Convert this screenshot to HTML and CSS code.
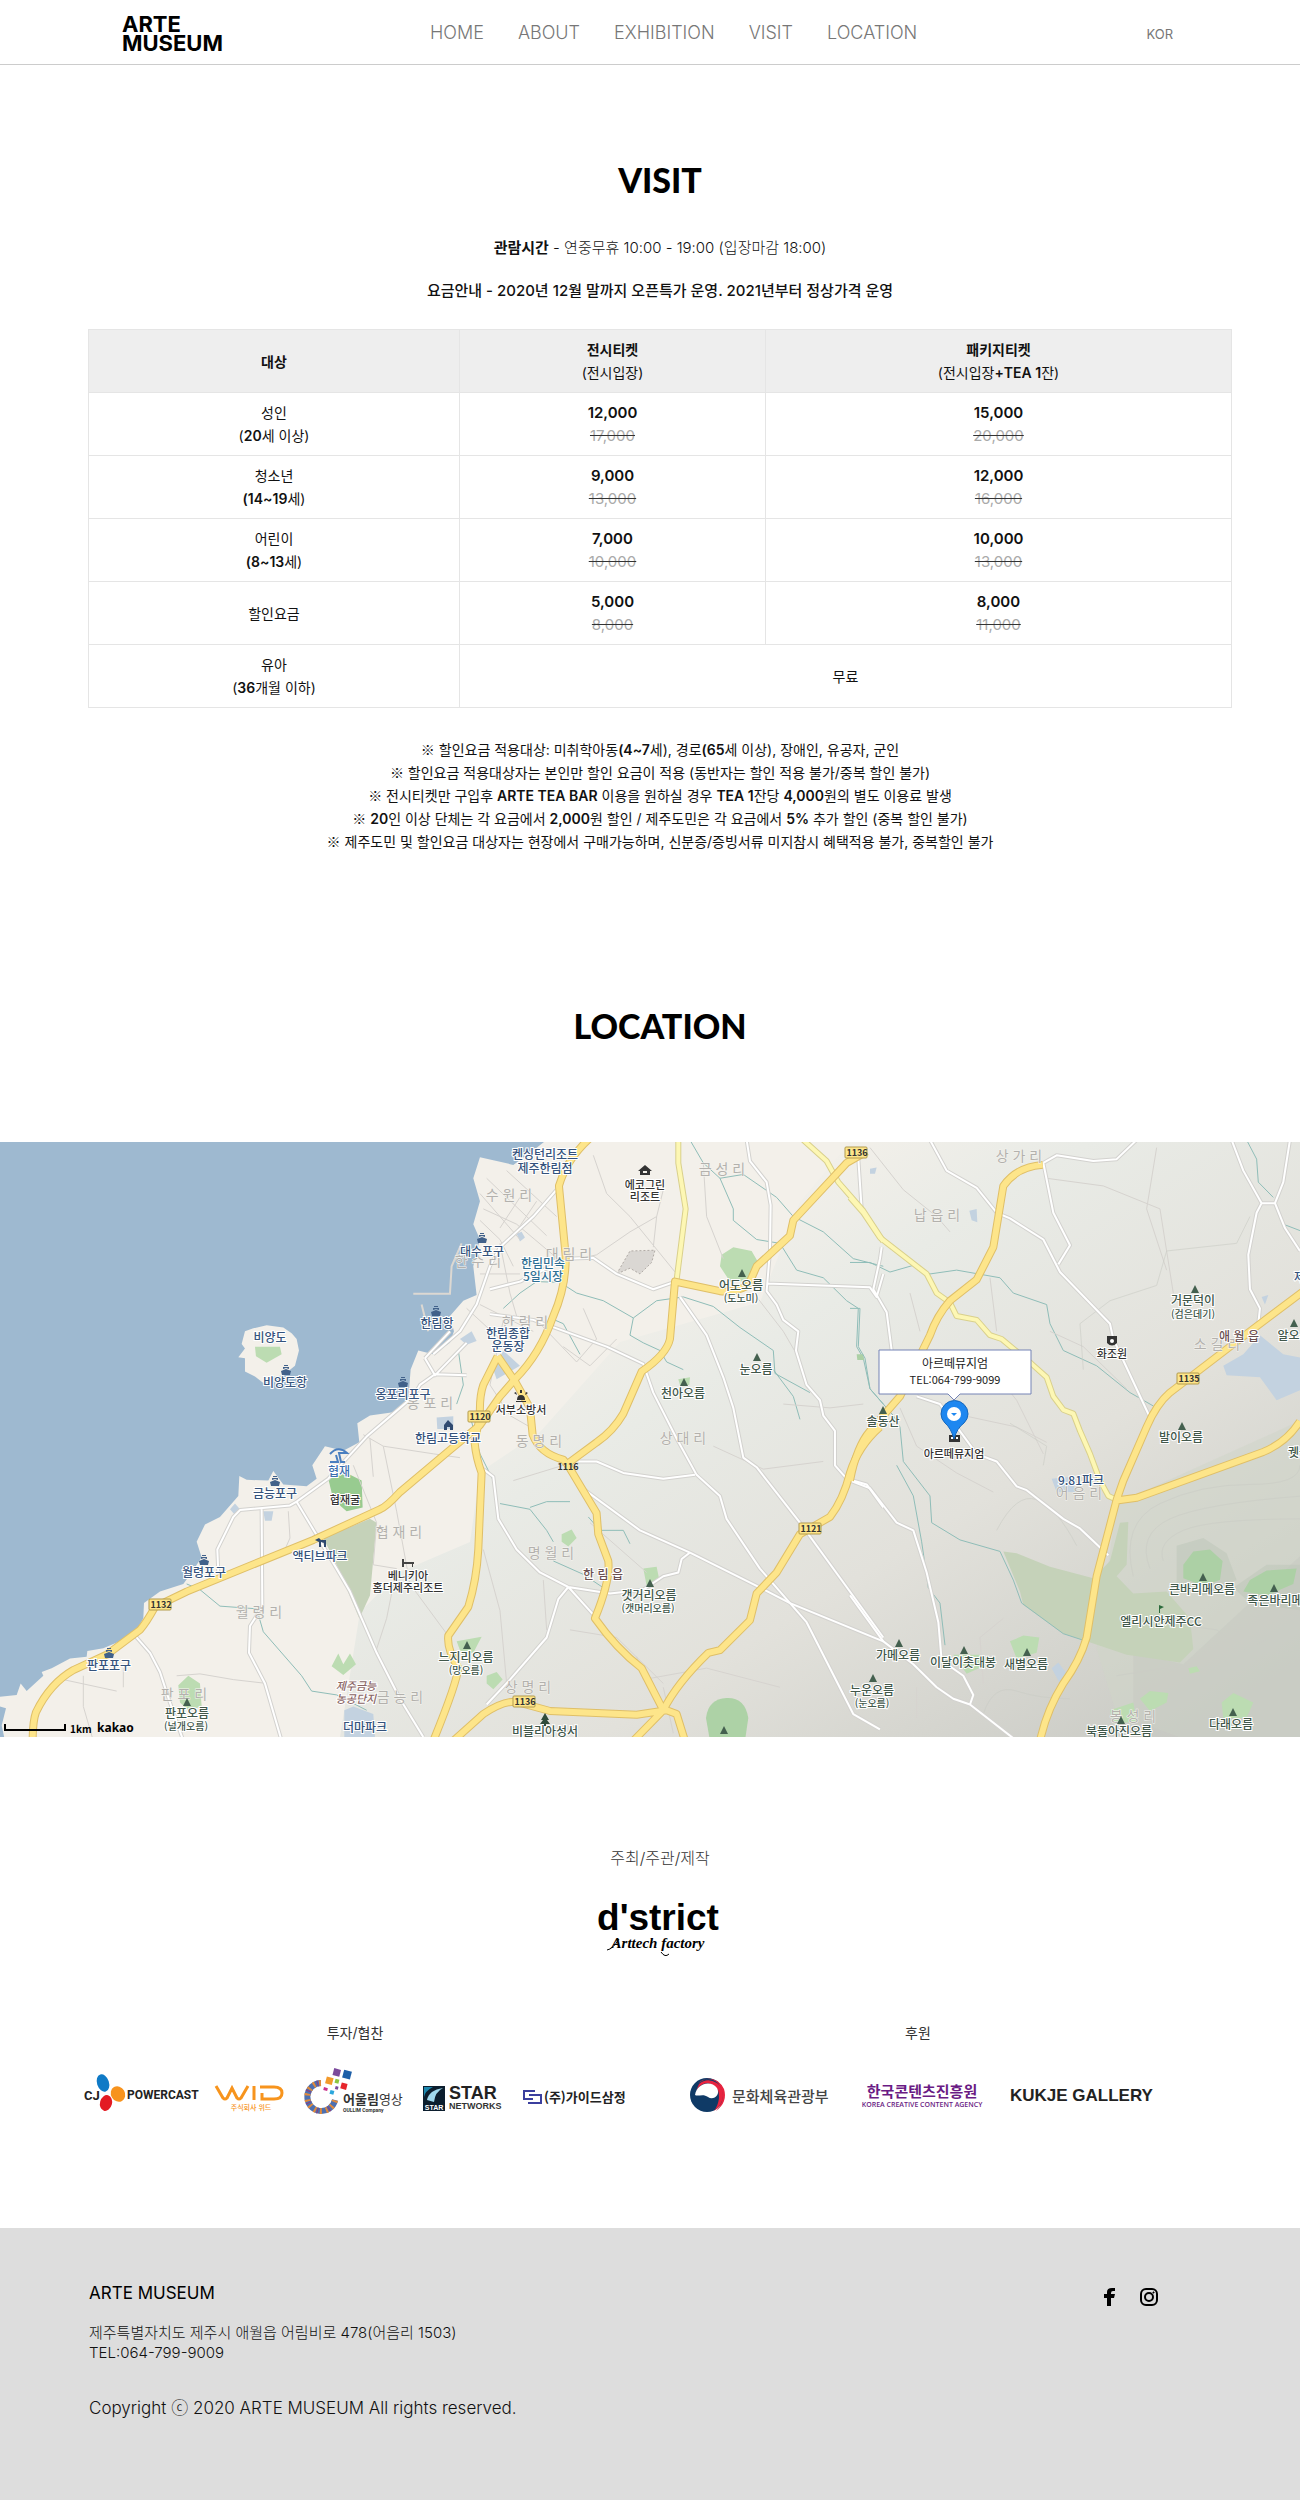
FILE: index.html
```html
<!DOCTYPE html>
<html lang="ko">
<head>
<meta charset="utf-8">
<meta name="viewport" content="width=device-width, initial-scale=1">
<title>ARTE MUSEUM</title>
<link rel="stylesheet" href="styles.css">
</head>
<body>
<header class="header">
  <a class="logo" href="#">ARTE<br>MUSEUM</a>
  <nav class="nav">
    <a href="#">HOME</a>
    <a href="#">ABOUT</a>
    <a href="#">EXHIBITION</a>
    <a href="#visit">VISIT</a>
    <a href="#location">LOCATION</a>
  </nav>
  <a class="lang" href="#">KOR</a>
</header>

<main>
<section class="visit" id="visit">
  <h2 class="heading">VISIT</h2>
  <p class="hours"><b>관람시간</b> - 연중무휴 10:00 - 19:00 (입장마감 18:00)</p>
  <p class="notice">요금안내 - 2020년 12월 말까지 오픈특가 운영. 2021년부터 정상가격 운영</p>
  <table class="prices">
    <colgroup><col class="col-who"><col class="col-ticket"><col></colgroup>
    <thead>
      <tr><th scope="col">대상</th><th scope="col">전시티켓<br><span>(전시입장)</span></th><th scope="col">패키지티켓<br><span>(전시입장<b>+TEA 1</b>잔)</span></th></tr>
    </thead>
    <tbody>
      <tr><td>성인<br>(<b>20</b>세 이상)</td><td class="price"><b>12,000</b><br><del>17,000</del></td><td class="price"><b>15,000</b><br><del>20,000</del></td></tr>
      <tr><td>청소년<br><b>(14~19</b>세)</td><td class="price"><b>9,000</b><br><del>13,000</del></td><td class="price"><b>12,000</b><br><del>16,000</del></td></tr>
      <tr><td>어린이<br><b>(8~13</b>세)</td><td class="price"><b>7,000</b><br><del>10,000</del></td><td class="price"><b>10,000</b><br><del>13,000</del></td></tr>
      <tr><td>할인요금</td><td class="price"><b>5,000</b><br><del>8,000</del></td><td class="price"><b>8,000</b><br><del>11,000</del></td></tr>
      <tr><td>유아<br>(<b>36</b>개월 이하)</td><td colspan="2">무료</td></tr>
    </tbody>
  </table>
  <div class="notes">
    <p><span class="mark">※</span> 할인요금 적용대상: 미취학아동<b>(4~7</b>세), 경로<b>(65</b>세 이상), 장애인, 유공자, 군인</p>
    <p><span class="mark">※</span> 할인요금 적용대상자는 본인만 할인 요금이 적용 (동반자는 할인 적용 불가/중복 할인 불가)</p>
    <p><span class="mark">※</span> 전시티켓만 구입후 <b>ARTE TEA BAR</b> 이용을 원하실 경우 <b>TEA 1</b>잔당 <b>4,000</b>원의 별도 이용료 발생</p>
    <p><span class="mark">※</span> <b>20</b>인 이상 단체는 각 요금에서 <b>2,000</b>원 할인 / 제주도민은 각 요금에서 <b>5%</b> 추가 할인 (중복 할인 불가)</p>
    <p><span class="mark">※</span> 제주도민 및 할인요금 대상자는 현장에서 구매가능하며, 신분증/증빙서류 미지참시 혜택적용 불가, 중복할인 불가</p>
  </div>
</section>

<section class="location" id="location">
  <h2 class="heading">LOCATION</h2>
  <svg class="map" viewBox="0 0 1300 595" preserveAspectRatio="xMidYMid slice" role="img" aria-label="아르떼뮤지엄 지도">
    <defs>
      <linearGradient id="relief" x1="0.3" y1="0.2" x2="1" y2="0.9">
        <stop offset="0" stop-color="#e9ebe6" stop-opacity="0"/>
        <stop offset="0.2" stop-color="#e9ebe6"/>
        <stop offset="0.55" stop-color="#e2e1db"/>
        <stop offset="1" stop-color="#c9cac4"/>
      </linearGradient>
      <path id="tri" d="M0-4 4 4H-4Z" fill="#44604f"/>
      <g id="ship" fill="#41618a"><path d="M-5 1 0-1 5 1 4 5H-4Z"/><path d="M-3-1V-3H3V-1L0-2Z"/><path d="M-2-5H2V-4H-2Z"/></g>
      <g id="major">
        <g transform="translate(0 -2) scale(.3333 .3827)">
          <path d="M98 1570Q98 1520 108 1495Q150 1420 220 1385L320 1345L420 1280Q440 1260 465 1220L560 1180 940 1045 1140 965Q1160 958 1200 920L1350 810 1440 745 1500 670 1545 625Q1620 560 1660 460Q1700 380 1697 300L1677 120Q1700 50 1770-5"/>
          <path d="M1493 565 1450 640Q1438 670 1440 720L1424 790Q1428 830 1445 870L1435 1070Q1430 1150 1405 1220L1345 1295Q1340 1330 1375 1380Q1370 1420 1300 1570"/>
          <path d="M1493 565 1545 630 1590 700 1598 770Q1620 820 1690 835L1704 850 1790 975 1795 1030 1825 1100Q1832 1150 1785 1250Q1850 1330 1925 1380L1990 1490"/>
        </g>
        <g transform="translate(430 -2) scale(.3333 .3827)">
          <path d="M1310 30 1250 60 1090 210 1080 250 980 330 955 380Q910 400 870 395L735 370 720 520Q710 560 635 605L580 715Q550 760 500 790L414 845"/>
          <path d="M70 1570 160 1500Q220 1465 260 1468L360 1492 620 1502 710 1490 740 1500 765 1570M610 1570 700 1490Q740 1420 835 1340L870 1333 960 1255 980 1185 1040 1130 1110 1030 1200 985Q1240 940 1260 870Q1285 800 1350 750"/>
        </g>
        <g transform="translate(850 -2) scale(.3333 .3827)">
          <path d="M578 65Q500 70 460 120L445 200 430 280 380 365 300 420Q260 460 240 510L150 670 60 760Q20 800 0 890"/>
          <path d="M1360 395 1200 500 1050 600 960 660Q920 690 890 750L820 890 800 940 740 1140 710 1300Q690 1360 640 1420Q590 1490 570 1570M800 942 860 935 1240 815Q1310 790 1350 735"/>
        </g>
      </g>
      <g id="minor">
        <g transform="translate(430 -2) scale(.3333 .3827)"><path d="M745 0V60L767 180 740 365"/><path d="M1120 0 1190 55 1225 110 1300 185 1360 265"/></g>
        <g transform="translate(850 -2) scale(.3333 .3827)"><path d="M0 150 40 190 90 255 230 350 260 400 300 425 320 460 380 470 420 510 455 520 545 585 590 620 610 670 640 705 670 715 690 760 720 820 750 890 775 930 800 940"/></g>
      </g>
      <g id="local">
        <g transform="translate(0 -2) scale(.3333 .3827)">
          <path d="M655 1130 652 1070 700 985 720 967 870 955 890 945 985 885 1100 775 1180 715 1240 670 1260 640 1305 612 1400 615M1275 570 1350 500M1275 570 1305 615 1400 530M890 945 1010 1120 1050 1180 1130 1340 1200 1460 1270 1560M785 965 787 1220 750 1270 747 1340 795 1420 845 1570M405 1295 450 1340 480 1390 510 1470 550 1570"/>
          <path d="M1300 560 1380 500 1430 430 1470 330 1500 280 1600 200 1670 130M1470 390 1560 370 1700 310 1780 308 1850 350 1960 390 2020 372M1470 455 1600 470 1820 540 1930 585 1960 660 2030 780 2090 875 2160 930 2180 990 2280 1120 2420 1260 2560 1500 2640 1540"/>
        </g>
        <g transform="translate(430 -2) scale(.3333 .3827)">
          <path d="M950 0 960 55 1010 110 1022 170 1020 290 1010 395 1040 430 1060 470 1105 500 1098 550 1130 640 1170 680 1180 720 1215 760 1215 850 1250 885 1310 900 1360 960M750 410 830 510 880 620 910 700 940 830 980 855 1110 1000 1360 1300M445 840 500 840 580 870 700 885 795 875M465 915 630 1020 780 1078 980 1165 1080 1210 1360 1310M1010 375 1320 385 1340 410 1360 350M160 860 190 880 205 990 260 1070 330 1130 415 1168 540 1185 640 1175 700 1140 745 1130 755 1095 780 1078M170 1475 240 1410 350 1300 385 1200 415 1168 500 1250"/>
        </g>
        <g transform="translate(850 -2) scale(.3333 .3827)">
          <path d="M25 50 35 180M240 0 290 80 380 125 440 190 480 205 580 260 630 345 780 480 790 520 900 725M580 60 610 190 660 275 625 325M580 60 620 40 730 55 800 50 860 0M95 280 90 310 70 390 110 450 125 550M200 670 270 690 380 820 440 840 500 905 530 915 640 990 690 1015 775 1085M0 890 60 910 140 1000 190 1020 230 1130 265 1260 275 1360 340 1400 370 1450 360 1475 310 1460 260 1430 190 1370 100 1310 0 1190M360 1475 500 1570M1145 0 1180 80 1235 165 1275 165 1300 110 1320 0M1235 165 1220 190 1195 300 1200 390 1230 440 1225 480M1275 165 1305 230 1350 290"/>
        </g>
      </g>
    </defs>

    <rect class="land" width="1300" height="595"/>
    <path d="M540 290 620 200 760 160 800 60 850 0H1300V595H340L360 470 400 430 470 400 480 330Z" fill="url(#relief)"/>
    <g transform="translate(850 -2) scale(.3333 .3827)">
      <path d="M800 950 1360 730V1570H1020L800 1500 740 1330Z" fill="#cfd6c9" opacity=".55"/>
      <path d="M850 1340 1000 1370 1360 1080V1570H850Z" fill="#c5c8c0" opacity=".45"/>
    </g>

    <g transform="translate(0 -2) scale(.3333 .3827)">
      <path class="sea" d="M0 1455 50 1450 62 1420 80 1440 130 1400 125 1390 155 1380 210 1355 260 1350 262 1335 310 1328 400 1295 430 1250 432 1210 480 1180 550 1160 575 1130 605 1090 590 1050 615 1005 660 985 715 930 718 878 740 888 805 890 820 865 850 900 920 905 950 885 937 850 975 800 1030 812 1078 790 1072 740 1110 720 1190 710 1225 680 1232 600 1255 550 1300 560 1350 530 1362 500 1350 460 1390 420 1430 405 1420 330 1440 260 1420 220 1440 160 1420 100 1440 45 1540 65 1610 20 1640 0H0Z"/>
      <path d="M1240 402H1350L1355 330 1385 270M1265 430 1285 500" fill="none" stroke="#dcd8d2" stroke-width="2"/>
      <path class="land" d="M735 500 760 492 800 484 850 490 875 505 890 520 897 550 885 590 850 615 815 620 790 635 765 618 735 605V570L715 568 735 545 725 533Z"/>
      <path class="wood" d="M765 540 840 540 845 560 800 582 768 565Z"/>
      <path class="sea" d="M0 1480 18 1485 5 1530 15 1570H0Z"/>
      <path fill="#98cb90" d="M985 885 1040 870 1085 890 1088 960 1040 970 1000 940Z"/>
      <path class="park" d="M970 1040 1110 990 1130 1000 1110 1190 1078 1250 1010 1110Z"/>
      <path class="wood" d="M1015 1342 1030 1370 1050 1342 1068 1370 1030 1398 995 1375ZM535 1425 565 1400 600 1420 605 1480 565 1490 540 1470Z"/>
      <path class="lake" d="M1033 1490 1060 1480 1120 1500 1125 1560H1033ZM690 965 705 950 720 965 705 980ZM790 970 820 970 815 995 795 995ZM1310 725 1360 722V755H1312ZM1380 520 1415 500 1430 525 1400 535ZM1480 600 1510 550 1560 590 1490 625ZM1550 245 1565 240 1575 255 1560 265Z"/>
      <path class="stream" d="M560 1160 600 1175 660 1218 770 1225 790 1285 905 1400 935 1440 1010 1450 1100 1490"/>
    </g>
    <g transform="translate(430 -2) scale(.3333 .3827)">
      <path class="wood" d="M875 300 910 280 965 290 985 320 960 370 900 370 870 330ZM745 625 780 620 778 640 750 640ZM395 1030 425 1018 440 1040 415 1062 395 1050ZM640 1120 680 1115 688 1150 650 1165ZM80 1310 155 1298 130 1340 95 1345ZM170 1400 200 1390 218 1410 190 1435 170 1420Z"/>
      <path fill="#add2a6" d="M828 1510Q835 1460 890 1458T955 1510L945 1570H840Z"/>
      <path d="M560 350 600 290 675 288 665 320 630 350 600 335Z" fill="#dad7d3" stroke="#b0aaa5" stroke-dasharray="2 2"/>
      <path class="stream" d="M780 0 820 60 870 100 910 180 910 210 980 260 1050 270 1100 340 1180 360 1250 420 1285 440 1280 540 1300 570 1320 650 1360 690M870 100 940 90 1040 150 1090 200 1180 240 1270 310 1360 330M220 440 270 400 320 370 390 372 440 400 520 420 610 465 600 510 640 530 690 550 710 580 760 600M610 465 680 420 760 410 850 435 930 490 1030 550 1035 610 1140 660M1030 600 1090 670 1110 730M360 465 400 480 450 560M210 950 300 965 350 1020 370 1050M300 960 350 945 420 945M475 985 510 1020 580 1020 600 1055M370 1100 460 1135 520 1170M85 550 100 640 80 690M120 720 150 820 190 890"/>
    </g>
    <g transform="translate(850 -2) scale(.3333 .3827)">
      <path class="park" d="M460 1075 500 1080 600 1115 730 1145 780 1100 810 1000 835 998 830 1110 800 1140 850 1185 950 1180 1020 1250 1030 1330 990 1365 830 1345 710 1310 640 1290 520 1215 510 1180Z"/>
      <path class="hill" d="M980 1060 1060 1040 1130 1080 1160 1150 1060 1190 980 1160ZM1150 1170 1250 1110 1360 1110V1230L1200 1210Z"/>
      <path class="wood" d="M480 1310 520 1295 568 1300 560 1340 500 1355ZM310 1345 390 1345 400 1375 350 1395ZM870 1460 900 1440 955 1445 950 1470 900 1492ZM1115 1470 1150 1445 1210 1470 1190 1510 1120 1510ZM1015 1380 1040 1375 1050 1388 1020 1395ZM780 1490 850 1470 860 1520 790 1525Z"/>
      <path fill="#acd0a5" d="M1000 1110 1030 1075 1080 1070 1118 1100 1110 1150 1060 1165 1000 1145ZM1200 1150 1250 1125 1340 1120 1330 1160 1250 1190 1180 1180ZM20 560 40 560 42 575 22 575Z"/>
      <path class="lake" d="M1120 590 1180 560 1230 510 1300 560 1360 570V650L1280 680 1230 620 1130 615ZM605 885 660 880 680 920 620 920ZM605 1380 625 1365 655 1400 630 1420ZM358 185 380 180 382 215 365 210ZM60 75 80 72 75 88 60 88ZM1235 410 1255 405 1245 430Z"/>
      <path class="stream" d="M0 320 60 320 120 345 200 325 240 350 320 340 450 360 490 400 590 430 600 480 640 550 740 590 840 660 910 695M0 440 30 440 25 540 45 570 60 650 130 720 150 750 160 840 240 930 245 1000 330 1045 450 1075 490 1150 515 1210 640 1290 710 1310M140 850 190 930 215 1050 235 1170 270 1210 285 1320M1190 0 1220 50 1225 110 1270 150M1300 220 1360 240"/>
    </g>

    <g transform="translate(0 -2) scale(.3333 .3827)">
      <path class="lane" d="M1090 770 1150 800 1300 820 1380 830M1110 780 1120 880M1150 800 1190 970 1230 1160 1340 1290M865 970 870 1040 850 1080M530 1400 600 1395 700 1410 800 1420M250 1400 250 1480 280 1570M190 1410 350 1440M370 1380V1430M1060 850 1130 1000 1120 1110 1190 1120 1160 1250 1130 1330M1440 140 1560 260M1460 100 1640 250M1520 80 1670 200M1450 180 1550 220 1700 330M1440 210 1500 260 1540 330M1440 350 1560 350M1500 270 1530 400 1550 460M1560 150 1500 230M1610 160 1540 250M1440 430 1600 500M1400 440 1500 520M1620 480 1730 580 1790 520 1750 440"/>
    </g>
    <g transform="translate(430 -2) scale(.3333 .3827)">
      <path class="lane" d="M490 40 530 140 600 200 740 350M700 130 680 200 600 240 500 300 450 310M680 200 670 280M820 60 830 200 880 310M980 410 1060 500 1100 560M220 470 180 640 240 720 300 750M250 890 400 850M480 1000 650 1130M160 1070 210 1230 230 1420M340 1150 350 1280M420 1280 560 1300 700 1420M620 1350 640 1410 830 1380 1050 1430M700 1430 730 1550M850 800 1000 860 1180 840M1060 690 1200 700 1300 690M560 520 480 590 400 540"/>
    </g>
    <g transform="translate(850 -2) scale(.3333 .3827)">
      <path class="lane" d="M60 20 160 130 260 200 300 240M590 100 760 120 930 180 970 400M920 20 890 180 950 340M420 360 440 500M150 700 200 800 320 870 430 920M340 720 500 750 590 790M180 400 210 500M400 570 500 680 580 820M830 650 700 540 600 500M200 1430 200 1510M400 1420 390 1300 460 1250"/>
      <path class="contour" d="M850 1140Q810 1000 930 950T1200 900 1350 850M900 1120Q860 1030 960 990T1360 930M940 1100Q920 1050 1000 1020T1360 990M850 1250 1100 1280 1180 1330 1360 1270M800 1400 940 1380 1050 1410 1120 1360 1360 1330M440 1020Q500 920 560 940T680 1060M480 740 590 800 580 850M700 600 690 480 780 420 920 380 950 290 1160 270 1200 200M400 1500Q430 1420 500 1440T660 1460"/>
    </g>

    <use href="#local" class="local-edge"/><use href="#local" class="local-fill"/>
    <use href="#minor" class="minor-edge"/><use href="#minor" class="minor-fill"/>
    <use href="#major" class="major-edge"/><use href="#major" class="major-fill"/>

    <g class="village">
      <text x="430" y="266">옹 포 리</text><text x="399" y="395">협 재 리</text><text x="259" y="475">월 령 리</text><text x="184" y="557">판 포 리</text><text x="400" y="560">금 능 리</text>
      <text x="509" y="58">수 원 리</text><text x="722" y="32">금 성 리</text><text x="478" y="124">한 수 리</text><text x="569" y="117">대 림 리</text><text x="525" y="185">한 림 리</text>
      <text x="539" y="304">동 명 리</text><text x="683" y="301">상 대 리</text><text x="551" y="416">명 월 리</text><text x="528" y="550">상 명 리</text>
      <text x="1019" y="19">상 가 리</text><text x="937" y="78">납 읍 리</text><text x="1217" y="207">소 길 리</text><text x="1079" y="356">어 음 리</text><text x="1133" y="579">봉 성 리</text>
    </g>
    <g class="place blue">
      <text x="270" y="200">비양도</text><text x="285" y="245">비양도항</text><text x="403" y="257">옹포리포구</text><text x="437" y="186">한림항</text><text x="275" y="356">금능포구</text>
      <text x="204" y="435">월령포구</text><text x="320" y="419">액티브파크</text><text x="109" y="528">판포포구</text><text x="365" y="590">더마파크</text><text x="448" y="301">한림고등학교</text>
      <text x="545" y="17">켄싱턴리조트</text><text x="545" y="31">제주한림점</text><text x="482" y="114">대수포구</text><text x="508" y="196">한림종합</text><text x="508" y="209">운동장</text>
      <text x="1081" y="343">9.81파크</text><text x="1305" y="140">제주</text>
    </g>
    <g class="place market"><text x="543" y="126">한림민속</text><text x="543" y="139">5일시장</text></g>
    <g class="place beach"><path d="M330 312Q338 303 347 311L339 311 341 320H345M330 320H338L336 313" fill="none" stroke="#4a7fc0"/><text x="339" y="334">협재</text></g>
    <g class="place dark">
      <text x="345" y="362">협재굴</text><text x="408" y="438">베니키아</text><text x="408" y="450">홈더제주리조트</text><text x="645" y="47">에코그린</text><text x="645" y="59">리조트</text>
      <text x="521" y="272">서부소방서</text><text x="1112" y="216">화조원</text><text x="954" y="316">아르떼뮤지엄</text>
    </g>
    <g class="place brown"><text x="603" y="437">한 림 읍</text><text x="1239" y="199">애 월 읍</text></g>
    <g class="place complex"><text x="356" y="548">제주금능</text><text x="356" y="561">농공단지</text></g>
    <g class="place green">
      <text x="187" y="576">판포오름</text><text x="741" y="148">어도오름</text><text x="756" y="232">눈오름</text><text x="683" y="256">천아오름</text><text x="649" y="458">갯거리오름</text><text x="466" y="520">느지리오름</text>
      <text x="545" y="594">비블리아성서</text><text x="883" y="284">솔동산</text><text x="1193" y="163">거문덕이</text><text x="1294" y="198">알오름</text><text x="1181" y="300">발이오름</text><text x="1310" y="315">궷물오름</text>
      <text x="1202" y="452">큰바리메오름</text><text x="1286" y="463">족은바리메오름</text><text x="1161" y="484">엘리시안제주CC</text><text x="898" y="518">가메오름</text><text x="963" y="525">이달이촛대봉</text><text x="1026" y="527">새별오름</text>
      <text x="872" y="553">누운오름</text><text x="1119" y="594">북돌아진오름</text><text x="1231" y="587">다래오름</text>
    </g>
    <g class="place green alias">
      <text x="186" y="588">(널개오름)</text><text x="741" y="160">(도노미)</text><text x="648" y="470">(갯머리오름)</text><text x="466" y="532">(망오름)</text><text x="1193" y="176">(검은데기)</text><text x="872" y="565">(눈오름)</text>
    </g>

    <use href="#tri" x="187" y="560"/><use href="#tri" x="742" y="131"/><use href="#tri" x="757" y="215"/><use href="#tri" x="684" y="240"/><use href="#tri" x="650" y="441"/><use href="#tri" x="467" y="503"/><use href="#tri" x="724" y="588"/><use href="#tri" x="1195" y="147"/><use href="#tri" x="1294" y="181"/><use href="#tri" x="1182" y="284"/><use href="#tri" x="1203" y="435"/><use href="#tri" x="1274" y="446"/><use href="#tri" x="899" y="501"/><use href="#tri" x="964" y="508"/><use href="#tri" x="1027" y="510"/><use href="#tri" x="873" y="536"/><use href="#tri" x="1233" y="570"/><use href="#tri" x="1121" y="578"/><use href="#tri" x="883" y="268"/>
    <use href="#ship" x="286" y="228"/><use href="#ship" x="403" y="240"/><use href="#ship" x="436" y="169"/><use href="#ship" x="275" y="339"/><use href="#ship" x="204" y="418"/><use href="#ship" x="109" y="511"/><use href="#ship" x="482" y="96"/>
    <path d="M315 398 319 396 321 398H326V405H324V401L321 400V405H319V400L317 399Z" fill="#2f4a70"/>
    <path d="M444 288V283L448 278 453 283V288H450V285H447V288Z" fill="#2f4a70"/>
    <path d="M402 417H404V420H414V422H413V425H412V422H404V425H402Z" fill="#444"/>
    <path d="M638 29 645 23 652 29H650V33H640V29ZM643 29V31H647V29Z" fill="#333" fill-rule="evenodd"/>
    <path d="M517 258Q517 253 521 253T525 258ZM516 259H526V260H516ZM520 248H522V251H520ZM514 251 516 250 517 253ZM528 251 526 250 525 253Z" fill="#333"/>
    <path d="M1107 194H1117V201Q1112 206 1107 201Z" fill="#333"/><circle cx="1112" cy="199" r="2" fill="#fff"/>
    <path d="M545 571 549 578H547L550 582H546V584H544V582H540L543 578H541Z" fill="#2f4a3a"/>
    <path d="M1159 463 1164 465 1160 467V471H1159Z" fill="#2c6b3c"/>

    <g class="shield">
      <rect x="149" y="457" width="22" height="11" rx="1"/><text x="161" y="466">1132</text>
      <rect x="468" y="269" width="22" height="11" rx="1"/><text x="480" y="278">1120</text>
      <text x="568" y="328">1116</text>
      <rect x="799" y="381" width="22" height="11" rx="1"/><text x="811" y="390">1121</text>
      <rect x="513" y="554" width="22" height="11" rx="1"/><text x="525" y="563">1136</text>
      <rect x="845" y="5" width="22" height="11" rx="1"/><text x="857" y="14">1136</text>
      <rect x="1177" y="231" width="22" height="11" rx="1"/><text x="1189" y="240">1135</text>
    </g>

    <path d="M949 293H960V300H949Z" fill="#333"/><path d="M951 295H953V297H951ZM956 295H958V297H956Z" fill="#fff"/>
    <path d="M954 297Q951 286 945 281Q941 277 941 272A13 13 0 0 1 968 272Q968 277 964 281Q957 286 954 297Z" fill="#1e87f0" stroke="#1567bd"/>
    <circle cx="954" cy="272" r="7" fill="#fff"/><path d="M951 271H957L954 274Z" fill="#1e87f0"/>
    <path class="bubble" d="M879 208H1031V252H960L954 258 948 252H879Z"/>
    <g class="bubble-text"><text x="955" y="226">아르떼뮤지엄</text><text class="tel" x="955" y="242">TEL:064-799-9099</text></g>

    <path d="M5 582V588H65V582" fill="none" stroke="#000" stroke-width="2"/>
    <text class="scale" x="70" y="591">1km</text><text class="kakao" x="97" y="590">kakao</text>
  </svg>
</section>

<section class="partners">
  <p class="host-title">주최/주관/제작</p>
  <svg class="host-logo" viewBox="0 0 122 56" role="img" aria-label="d'strict Arttech factory">
    <text class="district" x="61" y="30">d'strict</text>
    <text class="factory" x="61" y="48">Arttech factory</text>
    <path d="M10 50Q16 49 22 39M72 54Q68 58 64 52" fill="none" stroke="#000"/>
  </svg>
  <div class="groups">
    <div class="sponsors">
      <h3>투자/협찬</h3>
      <div class="logos">
        <svg width="112" height="44" role="img" aria-label="CJ Powercast">
          <ellipse cx="19" cy="14" rx="6" ry="9" fill="#0f7ac6" transform="rotate(-18 19 14)"/><ellipse cx="34" cy="25" rx="7" ry="8" fill="#f7931e" transform="rotate(-30 34 25)"/><ellipse cx="22" cy="34" rx="6" ry="8" fill="#e31b23" transform="rotate(15 22 34)"/>
          <text class="cj" x="0" y="31">CJ</text><text class="powercast" x="43" y="30">POWERCAST</text>
        </svg>
        <svg width="70" height="44" role="img" aria-label="WID">
          <path d="M1 17 8 29Q10 31 12 29L17 19 22 29Q24 31 26 29L33 17M39 17V31M45 18H59Q67 18 67 24T59 30H47V24" fill="none" stroke="#f7941d" stroke-width="3"/>
          <text class="wid" x="36" y="41">주식회사 위드</text>
        </svg>
        <svg width="100" height="44" role="img" aria-label="어울림영상">
          <g fill="none" stroke-width="6">
            <path d="M17 14A14 14 0 1 0 31 31" stroke="#4c6fb0"/>
            <path d="M17 14A14 14 0 1 0 31 31" stroke="#e08a3c" stroke-dasharray="2 4"/>
            <path d="M17 14A14 14 0 1 0 31 31" stroke="#8d3c7c" stroke-dasharray="0 3 1 8"/>
          </g>
          <g transform="rotate(15 32 12)"><path fill="#7b4a9c" d="M27 0H34V7H27Z"/><path fill="#1d5fa8" d="M37-1H45V7H37Z"/><path fill="#f39a2b" d="M22 10H29V17H22Z"/><path fill="#8cc63f" d="M31 10H35V14H31Z"/><path fill="#e6252b" d="M38 12H44V18H38Z"/><path fill="#c9308c" d="M22 21H26V24H22Z"/><path fill="#2aa7dd" d="M29 22H33V26H29Z"/><path fill="#7b4a9c" d="M33 17H36V20H33Z"/></g>
          <text class="eoulim" x="39" y="35">어울림<tspan class="light">영상</tspan></text><text class="tiny" x="39" y="43">OULLIM Company</text>
        </svg>
        <svg width="80" height="44" role="img" aria-label="STAR NETWORKS">
          <path fill="#0c1e2e" d="M0 17H22V42H0Z"/><path fill="#1c87ae" d="M1 18H10Q2 22 1 28Z"/><path d="M4 31Q6 21 20 19Q12 23 11 33Z" fill="#9fd8ee"/><text class="star-small" x="11" y="41">STAR</text>
          <text class="star" x="26" y="30">STAR</text><text class="networks" x="26" y="40">NETWORKS</text>
        </svg>
        <svg width="104" height="44" role="img" aria-label="(주)가이드삼정">
          <path d="M13 22H2V30H11M7 26H19V34H6" fill="none" stroke="#3b3f9e" stroke-width="2"/>
          <text class="guide" x="22" y="33">(주)가이드삼정</text>
        </svg>
      </div>
    </div>
    <div class="supporters">
      <h3>후원</h3>
      <div class="logos">
        <svg width="144" height="44" role="img" aria-label="문화체육관광부">
          <circle cx="17" cy="26" r="17" fill="#0f3a66"/>
          <path d="M8 14Q18 6 28 14Q34 22 32 32Q30 38 26 42Q38 33 34 20Q28 8 16 10Z" fill="#e8233f"/>
          <path d="M6 22Q12 12 21 15Q30 19 29 29Q28 37 24 42Q32 37 33 27Q33 18 27 14Q17 8 9 15Z" fill="#e8233f"/>
          <path d="M5 26C7 14 21 11 27 19C31 26 23 32 18 28C13 24 8 28 5 26Z" fill="#fff"/>
          <text class="mcst" x="42" y="33">문화체육관광부</text>
        </svg>
        <svg width="116" height="44" role="img" aria-label="한국콘텐츠진흥원">
          <text class="kocca" x="58" y="28">한국콘텐츠진흥원</text><text class="kocca-en" x="58" y="38">KOREA CREATIVE CONTENT AGENCY</text>
        </svg>
        <svg width="148" height="44" role="img" aria-label="KUKJE GALLERY"><text class="kukje" x="0" y="32">KUKJE GALLERY</text></svg>
      </div>
    </div>
  </div>
</section>
</main>

<footer class="footer">
  <div>
    <p class="brand">ARTE MUSEUM</p>
    <address>제주특별자치도 제주시 애월읍 어림비로 478(어음리 1503)<br>TEL:064-799-9009</address>
    <p class="copyright">Copyright ⓒ 2020 ARTE MUSEUM All rights reserved.</p>
  </div>
  <div class="social">
    <a href="#" aria-label="Facebook"><svg width="12" height="20" viewBox="0 0 12 20"><path d="M3 19V11H0V7H3V5Q3 1 8 1H11V4H9Q7 4 7 6V7H11L10 11H7V19Z"/></svg></a>
    <a href="#" aria-label="Instagram"><svg width="18" height="20" viewBox="0 0 18 20" fill="none" stroke="#000" stroke-width="2"><rect x="1" y="2" width="16" height="16" rx="5"/><circle cx="9" cy="10" r="4"/><path d="M13 5H14V6H13Z" fill="#000" stroke-width="1"/></svg></a>
  </div>
</footer>
</body>
</html>
```
FILE: styles.css
```css
* { box-sizing: border-box; }
body {
  margin: 0;
  background: #fff;
  color: #111;
  font: 14px/23px Inter, "Noto Sans CJK KR", sans-serif;
}
p, h2, h3 { margin: 0; }
a { color: inherit; text-decoration: none; }
b { font-weight: 600; }

.header {
  display: grid;
  grid-template-columns: 308px 1fr auto;
  align-items: center;
  height: 65px;
  padding: 0 127px 0 122px;
  border-bottom: 1px solid #ccc;
  color: #777;
}
.logo { color: #000; font-size: 22px; font-weight: 700; line-height: 19px; padding-top: 4px; }
.nav { display: flex; gap: 34px; font-size: 18px; font-weight: 300; }
.lang { font-size: 13px; padding-top: 5px; }

.visit { padding: 95px 68px 0 88px; text-align: center; }
.heading { color: #000; font: 900 34px/40px Lato, sans-serif; text-align: center; }
.hours { margin-top: 36px; font-size: 15px; font-weight: 300; }
.notice { margin-top: 20px; font-size: 15px; font-weight: 500; }
.prices {
  width: 100%;
  margin: 27px 0 30px;
  border-collapse: collapse;
  table-layout: fixed;
}
.col-who { width: 371px; }
.col-ticket { width: 306px; }
.prices th, .prices td { padding: 8px; border: 1px solid #e5e5e5; }
.prices th { background: #eee; font-weight: 600; }
.prices th span { font-weight: 400; }
.prices .price { font-size: 15px; }
.prices del { color: #aaa; text-decoration-color: #333; }
.mark { font-family: "Noto Sans CJK KR", sans-serif; }

.location { padding-top: 153px; }
.location .heading { padding-left: 20px; }
.map { display: block; width: 100%; height: 595px; margin-top: 96px; }
.map path { vector-effect: non-scaling-stroke; }
.map text { font-family: "Noto Sans CJK KR", sans-serif; text-anchor: middle; }
.land { fill: #f3f0ea; }
.sea { fill: #9eb9d0; }
.lake { fill: #c3d2e0; }
.wood { fill: #bcdcb2; }
.park { fill: #c5d2b9; }
.hill { fill: #bfc8ba; opacity: .6; }
.stream { fill: none; stroke: #8fbdb8; stroke-width: 1px; }
.lane { fill: none; stroke: #d6d3cf; stroke-width: 1px; }
.contour { fill: none; stroke: #cbcdc6; stroke-width: 1px; opacity: .6; }
.local-edge, .local-fill, .minor-edge, .minor-fill, .major-edge, .major-fill { fill: none; stroke-linejoin: round; }
.local-edge { stroke: #d3d2cf; stroke-width: 4px; }
.local-fill { stroke: #fff; stroke-width: 2px; }
.minor-edge { stroke: #d9d08c; stroke-width: 6px; }
.minor-fill { stroke: #fdf7b4; stroke-width: 4px; }
.major-edge { stroke: #dfbf68; stroke-width: 8px; }
.major-fill { stroke: #fde58a; stroke-width: 6px; }
.map .village { fill: #b3b1ad; font-size: 14px; stroke: #f5f4f0; stroke-width: 1px; paint-order: stroke; }
.place { font-size: 12px; font-weight: 500; stroke: #fff; stroke-width: 2px; paint-order: stroke; }
.blue { fill: #34527c; }
.market { fill: #2f6f94; }
.beach { fill: #3c6fb0; }
.dark { fill: #333; font-size: 11px; }
.brown { fill: #6b5050; }
.complex { fill: #8a6565; font-size: 11px; font-style: italic; }
.green { fill: #41574a; }
.alias { font-size: 10px; }
.shield { font-size: 9px; font-weight: 700; fill: #333; }
.shield rect { fill: #fde58a; stroke: #b39b4c; }
.bubble { fill: #fff; stroke: #7483b5; }
.bubble-text { font-size: 12px; fill: #222; }
.bubble-text .tel { font-size: 11px; }
.map .scale { font-size: 10px; font-weight: 700; text-anchor: start; }
.map .kakao { font: 700 12px "Noto Sans", sans-serif; text-anchor: start; }

.partners { padding: 110px 68px 115px 84px; color: #333; }
.host-title { padding-left: 4px; font-size: 16px; text-align: center; font-weight: 300; }
.host-logo { display: block; width: 122px; height: 56px; margin: 30px auto 0; }
.host-logo text { text-anchor: middle; fill: #000; }
.district { font: 700 37px "Liberation Sans", sans-serif; }
.factory { font: italic 700 15px "Liberation Serif", serif; }
.groups { display: flex; gap: 64px; margin-top: 65px; }
.groups h3 { margin-bottom: 25px; font-size: 14px; font-weight: 400; text-align: center; }
.groups .supporters h3 { padding-right: 12px; }
.logos { display: flex; justify-content: space-between; }
.logos svg { display: block; overflow: visible; }
.sponsors { width: 542px; }
.supporters { width: 468px; }
.cj { font: 700 13px Roboto, sans-serif; fill: #222; }
.powercast { font: 700 12px Roboto, sans-serif; fill: #222; }
.wid { font: 500 7px "Noto Sans CJK KR", sans-serif; fill: #f7941d; text-anchor: middle; }
.eoulim { font: 700 13px "Noto Sans CJK KR", sans-serif; fill: #333; }
.eoulim .light { font-weight: 400; }
.tiny { font: 700 5px Roboto, sans-serif; fill: #333; }
.star { font: 700 18px "Liberation Sans", sans-serif; fill: #222; }
.networks { font: 700 9px "Liberation Sans", sans-serif; fill: #333; }
.star-small { font: 700 7px "Liberation Sans", sans-serif; fill: #fff; text-anchor: middle; }
.guide { font: 700 13px "Noto Sans CJK KR", sans-serif; fill: #222; }
.mcst { font: 500 15px "Noto Sans CJK KR", sans-serif; fill: #444; }
.kocca { font: 700 15px "Noto Sans CJK KR", sans-serif; fill: #6a1b84; text-anchor: middle; }
.kocca-en { font: 600 7px "Open Sans", sans-serif; fill: #6a1b84; text-anchor: middle; }
.kukje { font: 700 17px "Liberation Sans", sans-serif; fill: #222; }

.footer {
  display: flex;
  justify-content: space-between;
  min-height: 272px;
  padding: 54px 142px 80px 89px;
  background: #ddd;
  font-size: 15px;
  font-weight: 300;
}
.brand { color: #000; font-size: 17px; font-weight: 400; }
address { margin: 18px 0 34px; font-style: normal; line-height: 20px; }
.copyright { font-size: 17px; }
.social { display: flex; gap: 24px; padding-top: 5px; }
.social svg { display: block; }
```
